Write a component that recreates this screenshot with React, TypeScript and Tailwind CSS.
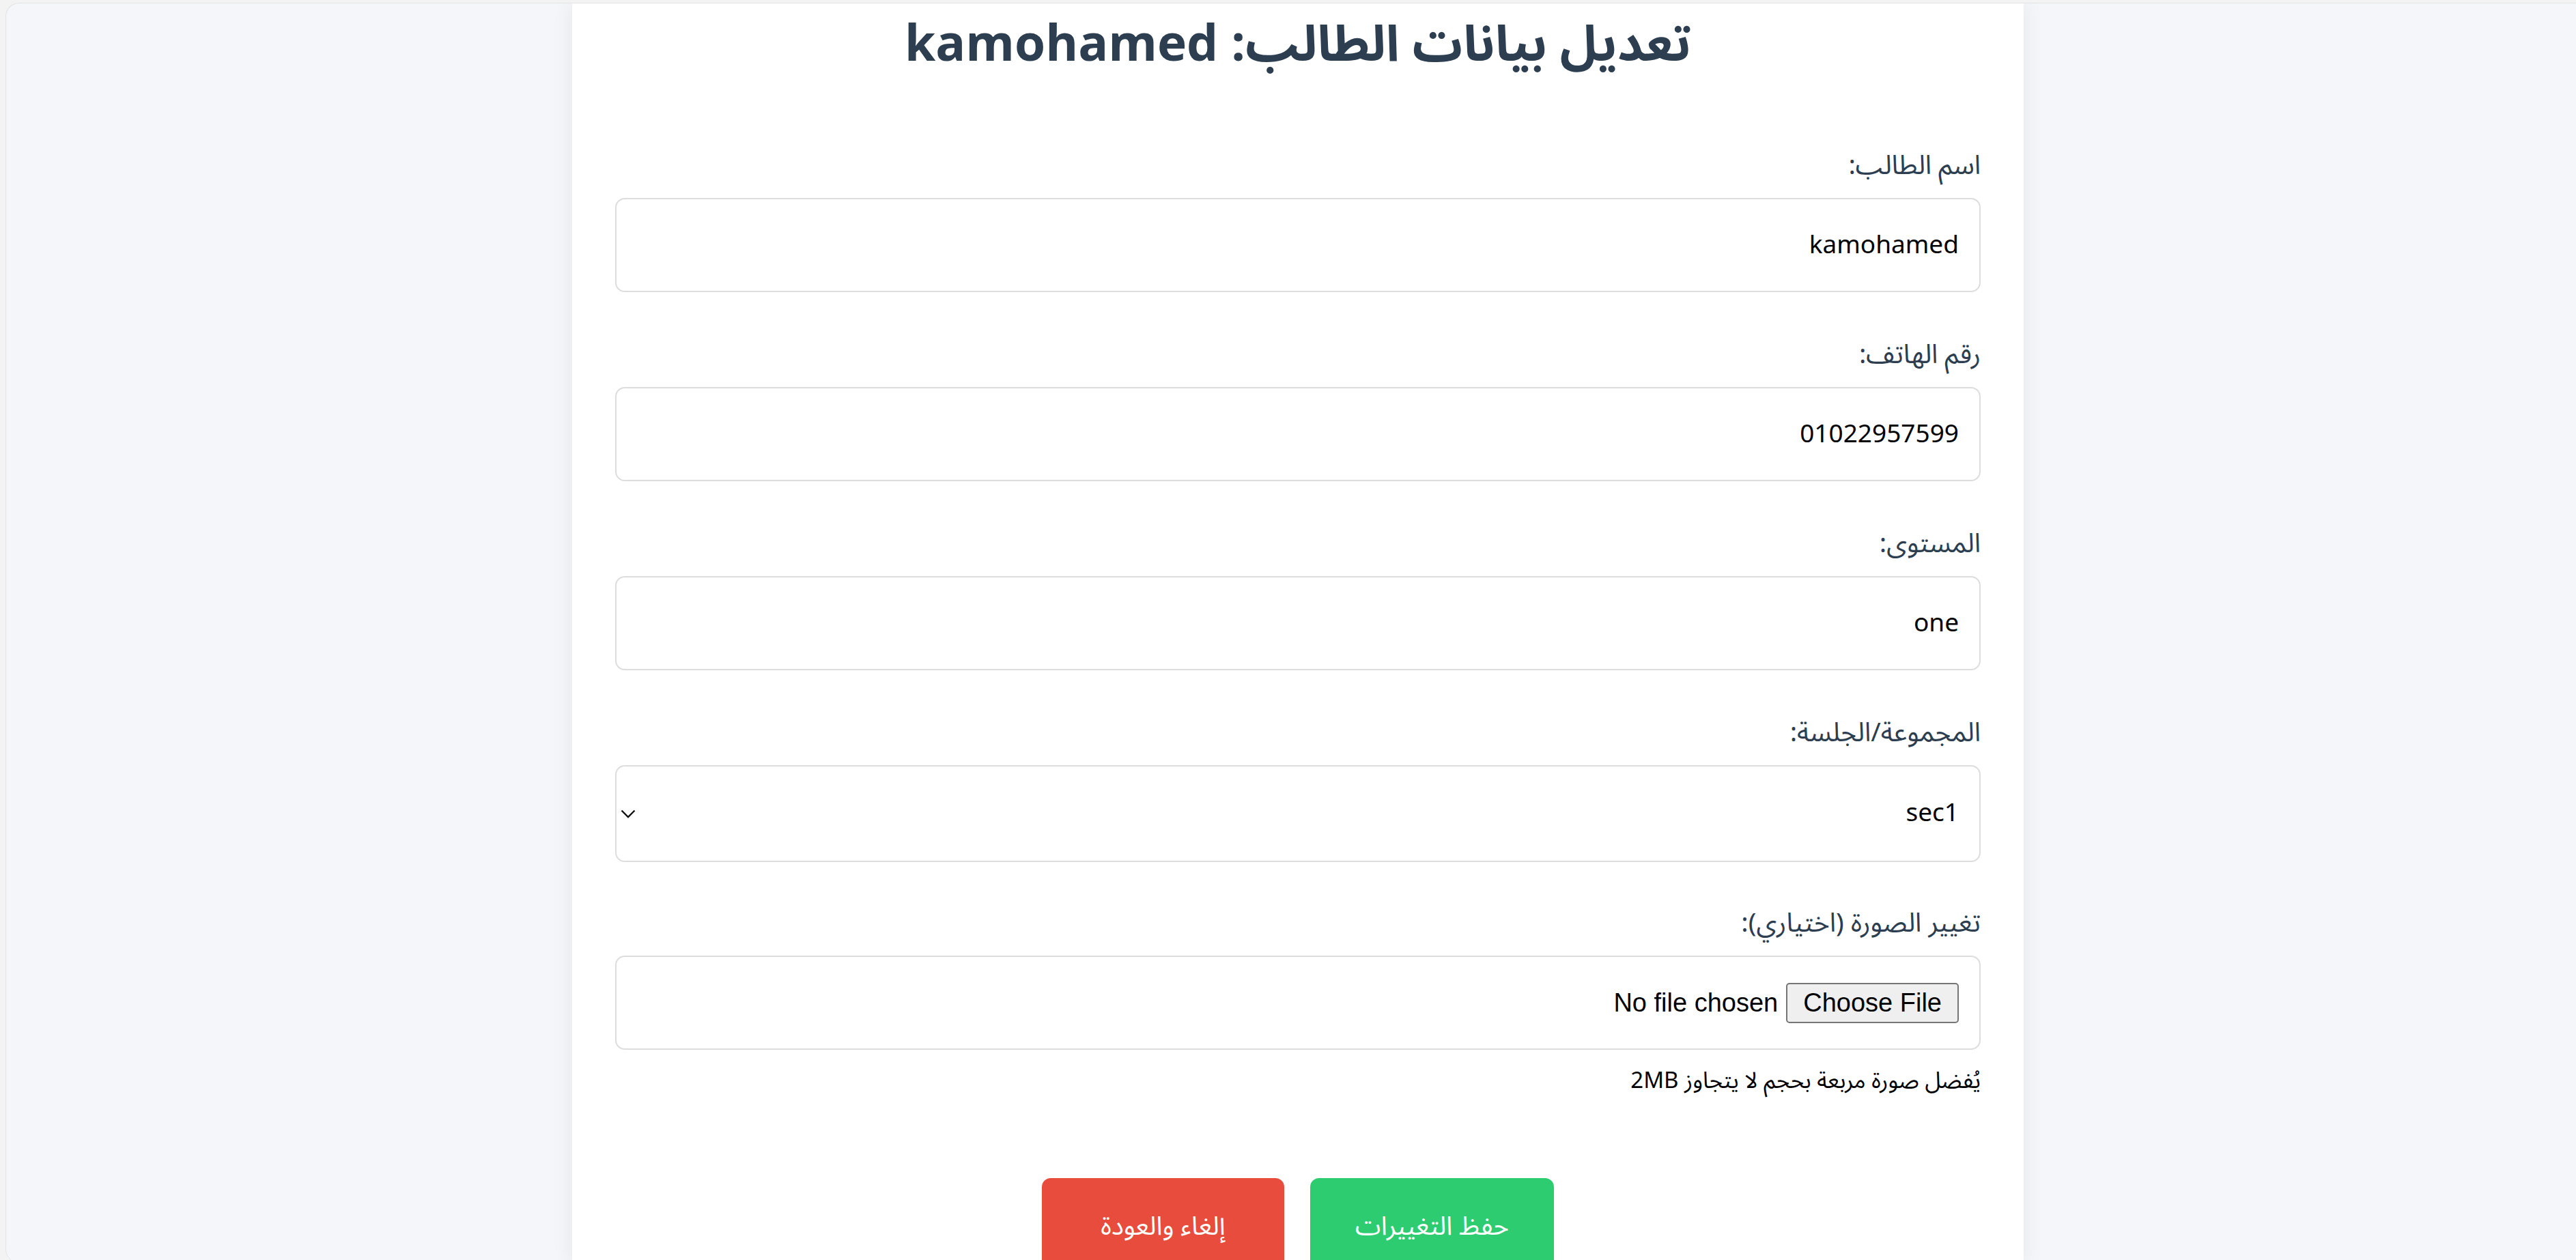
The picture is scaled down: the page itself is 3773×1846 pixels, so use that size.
import { useState } from "react"

const fontStack = "font-['Noto_Sans_Arabic','Noto_Sans','DejaVu_Sans',sans-serif]"

function Field({ label, value }: { label: string; value: string }) {
  return (
    <div className="mb-[63px]">
      <label className="block text-[39px] leading-[58px] text-[#2c3e50] mb-[18px]">{label}</label>
      <input
        defaultValue={value}
        className="block w-full h-[138px] px-[30px] rounded-[14px] border-[2.4px] border-[#dddddd] bg-white text-[37px] text-black outline-none"
      />
    </div>
  )
}

export default function App() {
  const [group, setGroup] = useState("sec1")

  return (
    <div className={`h-screen overflow-hidden bg-[#f3f3f3] ${fontStack}`}>
      <div className="h-full mt-[4px] ml-[8px] rounded-tl-[20px] rounded-bl-[20px] border-l border-t border-[#e3e3e3] bg-[#f4f6f9] pl-[20px] flex justify-center overflow-hidden">
        <div dir="rtl" className="w-[2126px] shrink-0 bg-white shadow-[0_0_30px_rgba(0,0,0,0.07)] px-[63px] pt-[4px]">
          <h1 className="text-center text-[73px] leading-[114px] font-bold text-[#2c3e50] mb-[91px]">
            تعديل بيانات الطالب: kamohamed
          </h1>

          <form onSubmit={(e) => e.preventDefault()}>
            <Field label="اسم الطالب:" value="kamohamed" />
            <Field label="رقم الهاتف:" value="01022957599" />
            <Field label="المستوى:" value="one" />

            {/* group / session select */}
            <div className="mb-[61px]">
              <label className="block text-[39px] leading-[58px] text-[#2c3e50] mb-[18px]">المجموعة/الجلسة:</label>
              <div className="flex items-center h-[142px] pr-[30px] pl-[6px] rounded-[14px] border-[2.4px] border-[#dddddd] bg-white">
                <select
                  value={group}
                  onChange={(e) => setGroup(e.target.value)}
                  className="flex-1 appearance-none bg-transparent text-[37px] text-black outline-none"
                >
                  <option value="sec1">sec1</option>
                  <option value="sec2">sec2</option>
                </select>
                <svg width="22" height="13" viewBox="0 0 22 13" fill="none" className="shrink-0">
                  <path d="M1.5 1.5 L11 11 L20.5 1.5" stroke="#111" strokeWidth="2.4" />
                </svg>
              </div>
            </div>

            {/* image upload */}
            <div>
              <label className="block text-[39px] leading-[58px] text-[#2c3e50] mb-[18px]">تغيير الصورة (اختياري):</label>
              <div className="flex items-center gap-[12px] h-[138px] px-[30px] rounded-[14px] border-[2.4px] border-[#dddddd] bg-white font-['Liberation_Sans',Arial,sans-serif] text-[38px] text-black">
                <span className="h-[59px] px-[23px] flex items-center rounded-[5px] border-[2.4px] border-[#767676] bg-[#efefef] leading-none">
                  Choose File
                </span>
                <span dir="ltr">No file chosen</span>
              </div>
              <p className="mt-[22px] text-[33px] leading-[48px] text-black">يُفضل صورة مربعة بحجم لا يتجاوز 2MB</p>
            </div>

            <div className="flex justify-center gap-[38px] mt-[118px]">
              <button type="submit" className="w-[357px] h-[142px] rounded-[13px] bg-[#2ecc71] text-white text-[38px]">
                حفظ التغييرات
              </button>
              <button type="button" className="w-[355px] h-[142px] rounded-[13px] bg-[#e74c3c] text-white text-[38px]">
                إلغاء والعودة
              </button>
            </div>
          </form>
        </div>
      </div>
    </div>
  )
}
